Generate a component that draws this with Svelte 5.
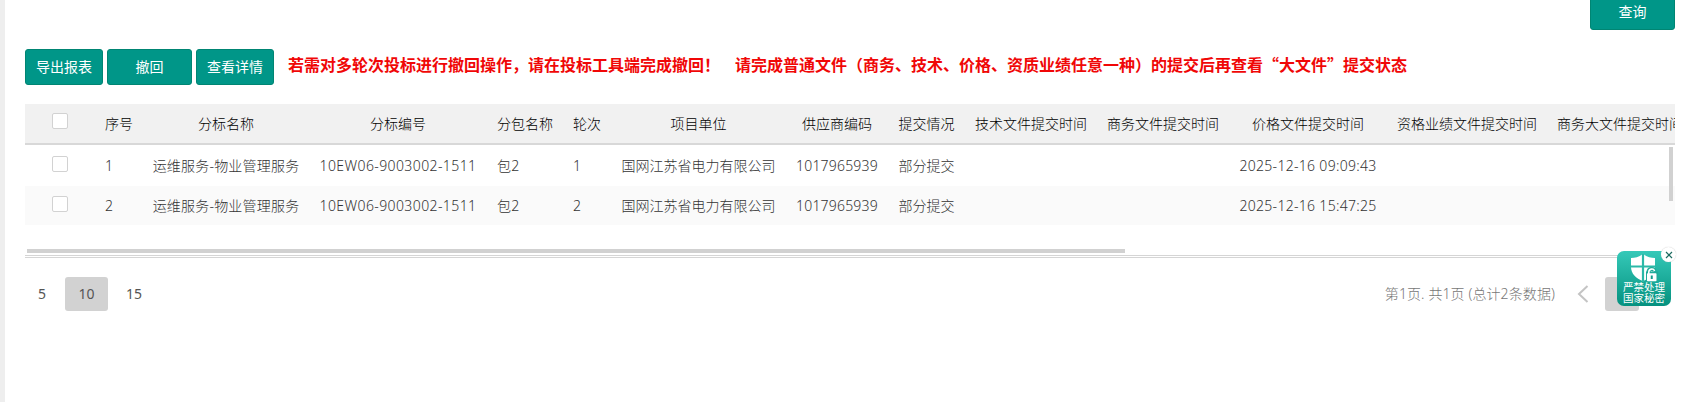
<script lang="ts">
  type Row = {
    index: number;
    lotName: string;
    lotCode: string;
    pack: string;
    round: number;
    unit: string;
    supplier: string;
    status: string;
    priceTime: string;
  };

  const COLUMNS = [
    { key: 'index', label: '序号', width: 48 },
    { key: 'lotName', label: '分标名称', width: 166 },
    { key: 'lotCode', label: '分标编号', width: 178 },
    { key: 'pack', label: '分包名称', width: 76 },
    { key: 'round', label: '轮次', width: 48 },
    { key: 'unit', label: '项目单位', width: 175 },
    { key: 'supplier', label: '供应商编码', width: 102 },
    { key: 'status', label: '提交情况', width: 77 },
    { key: 'techTime', label: '技术文件提交时间', width: 132 },
    { key: 'bizTime', label: '商务文件提交时间', width: 132 },
    { key: 'priceTime', label: '价格文件提交时间', width: 158 },
    { key: 'qualTime', label: '资格业绩文件提交时间', width: 160 },
    { key: 'bizBigTime', label: '商务大文件提交时间', width: 146 }
  ];

  const ROWS: Row[] = [
    {
      index: 1,
      lotName: '运维服务-物业管理服务',
      lotCode: '10EW06-9003002-1511',
      pack: '包2',
      round: 1,
      unit: '国网江苏省电力有限公司',
      supplier: '1017965939',
      status: '部分提交',
      priceTime: '2025-12-16 09:09:43'
    },
    {
      index: 2,
      lotName: '运维服务-物业管理服务',
      lotCode: '10EW06-9003002-1511',
      pack: '包2',
      round: 2,
      unit: '国网江苏省电力有限公司',
      supplier: '1017965939',
      status: '部分提交',
      priceTime: '2025-12-16 15:47:25'
    }
  ];

  const PAGE_SIZES = [5, 10, 15];

  let pageSize = $state(10);
  let selected = $state<number[]>([]);
  let badgeOpen = $state(true);

  function toggleAll() {
    selected = selected.length === ROWS.length ? [] : ROWS.map((row) => row.index);
  }
</script>

<div class="page">
  <div class="search-bar">
    <button type="button" class="btn btn-wide">查询</button>
  </div>

  <div class="toolbar">
    <button type="button" class="btn">导出报表</button>
    <button type="button" class="btn btn-wide">撤回</button>
    <button type="button" class="btn">查看详情</button>
    <p class="notice">
      <span>若需对多轮次投标进行撤回操作，请在投标工具端完成撤回！</span>
      <span>请完成普通文件（商务、技术、价格、资质业绩任意一种）的提交后再查看“大文件”提交状态</span>
    </p>
  </div>

  <div class="grid">
    <table>
      <colgroup>
        <col style:width="70px" />
        {#each COLUMNS as column}
          <col style:width="{column.width}px" />
        {/each}
      </colgroup>
      <thead>
        <tr>
          <th>
            <input
              type="checkbox"
              aria-label="全选"
              checked={selected.length === ROWS.length}
              onchange={toggleAll}
            />
          </th>
          {#each COLUMNS as column}
            <th>{column.label}</th>
          {/each}
        </tr>
      </thead>
      <tbody>
        {#each ROWS as row}
          <tr>
            <td class="check">
              <input type="checkbox" aria-label="选择" value={row.index} bind:group={selected} />
            </td>
            {#each COLUMNS as column}
              <td class={column.key}>{row[column.key as keyof Row] ?? ''}</td>
            {/each}
          </tr>
        {/each}
      </tbody>
    </table>
    <div class="scroll-y"></div>
    <div class="scroll-x"></div>
  </div>

  <div class="pager">
    <div class="sizes">
      {#each PAGE_SIZES as size}
        <button
          type="button"
          class="size"
          class:size-active={pageSize === size}
          onclick={() => (pageSize = size)}
        >
          {size}
        </button>
      {/each}
    </div>
    <div class="pages">
      <span class="summary">第1页. 共1页 (总计2条数据)</span>
      <svg class="prev" width="12" height="18" viewBox="0 0 12 18">
        <path d="M10.5 1 2 9l8.5 8" fill="none" stroke="#c4c4c4" stroke-width="2" />
      </svg>
      <span class="current"></span>
    </div>
  </div>

  {#if badgeOpen}
    <div class="badge">
      <svg width="28" height="28" viewBox="0 0 28 28">
        <path
          d="M1 4C5 4 8.500 3 13 0c4.500 3 8 4 12 4v9c0 6.500-5 11.500-12 14C6 24.500 1 19.500 1 13z"
          fill="#fff"
        />
        <path d="M13 0v28M0 12.500h26" stroke="#2bb9a8" stroke-width="2.200" />
        <path d="M16 17.500h12V28H16z" fill="#1fab99" />
        <path d="M18.500 20v-2a3.200 3.200 0 0 1 6.200-1" fill="none" stroke="#1fab99" stroke-width="4" />
        <path d="M18.800 20v-2a3 3 0 0 1 5.800-1" fill="none" stroke="#fff" stroke-width="1.600" />
        <rect x="17" y="19.300" width="9.500" height="8" rx="0.800" fill="#fff" />
        <path d="M21.750 21.500v3.500" stroke="#159b8b" stroke-width="2" />
      </svg>
      <span>严禁处理</span>
      <span>国家秘密</span>
      <button type="button" class="badge-close" aria-label="关闭" onclick={() => (badgeOpen = false)}>
        <svg width="8" height="8" viewBox="0 0 8 8">
          <path d="M1 1l6 6M7 1 1 7" stroke="#1d6b60" stroke-width="1.200" />
        </svg>
      </button>
    </div>
  {/if}
</div>

<style>
  :global(body) {
    background: #fff;
  }

  .page {
    box-sizing: border-box;
    position: relative;
    height: 402px;
    overflow: hidden;
    border-left: 5px solid #eee;
    padding: 0 19px 0 20px;
    font-family: 'Noto Sans', 'Noto Sans CJK SC', sans-serif;
    font-size: 14px;
    font-weight: 300;
    color: #333;
  }

  button {
    font-family: inherit;
    cursor: pointer;
  }

  .search-bar {
    display: flex;
    justify-content: flex-end;
    margin-top: -6px;
  }

  .btn {
    box-sizing: border-box;
    width: 78px;
    height: 36px;
    padding: 0;
    border: 1px solid #008573;
    border-radius: 3px;
    background: #009688;
    color: #fff;
    font-size: 14px;
    line-height: 34px;
    white-space: nowrap;
  }

  .btn-wide {
    width: 85px;
  }

  .toolbar {
    display: flex;
    gap: 4px;
    margin-top: 19px;
  }

  .notice {
    display: flex;
    gap: 15px;
    margin: 0 0 0 10px;
    color: #f00707;
    font-family: 'Noto Sans CJK SC', sans-serif;
    font-size: 16px;
    font-weight: 700;
    line-height: 30px;
    white-space: nowrap;
  }

  .grid {
    position: relative;
    height: 151px;
    margin-top: 19px;
    overflow: hidden;
    border-bottom: 1px solid #d5d5d5;
    box-shadow: 0 1px #fff, 0 2px #d5d5d5;
  }

  table {
    width: 1568px;
    table-layout: fixed;
    border-collapse: separate;
    border-spacing: 0;
  }

  th,
  td {
    box-sizing: border-box;
    padding: 0 0 2px;
    text-align: center;
    font-weight: inherit;
    white-space: nowrap;
  }

  th {
    height: 41px;
    border-bottom: 2px solid #d8d8d8;
    background: #f1f1f1;
    color: #000;
  }

  td {
    height: 41px;
    padding-bottom: 1px;
    letter-spacing: 0.2px;
  }

  tbody tr:nth-child(2) td {
    height: 39px;
    background: #fafafa;
  }

  td.index,
  td.pack,
  td.round {
    padding-left: 10px;
    text-align: left;
  }

  td.lotCode {
    letter-spacing: 0.4px;
  }

  td.unit,
  td.status {
    letter-spacing: 0;
  }

  td.priceTime {
    letter-spacing: 0.3px;
  }

  input {
    appearance: none;
    display: block;
    box-sizing: border-box;
    width: 16px;
    height: 16px;
    margin: -3px auto 0 27px;
    border: 1px solid #d2d2d2;
    border-radius: 2px;
    background: #fff;
  }

  input:checked {
    background: #009688;
  }

  .scroll-y {
    position: absolute;
    top: 43px;
    right: 2px;
    width: 4px;
    height: 54px;
    background: #d1d1d1;
  }

  .scroll-x {
    position: absolute;
    left: 2px;
    bottom: 2px;
    width: 1098px;
    height: 4px;
    background: #d1d1d1;
  }

  .pager {
    display: flex;
    justify-content: space-between;
    margin-top: 21px;
  }

  .sizes,
  .pages {
    display: flex;
    align-items: center;
  }

  .sizes {
    gap: 5px;
  }

  .size {
    height: 34px;
    padding: 0 13px 2px;
    border: 0;
    border-radius: 3px;
    background: none;
    color: #555;
    font-size: 14px;
  }

  .size-active {
    width: 43px;
    margin-left: 1px;
    background: #d2d2d2;
  }

  .summary {
    padding-bottom: 2px;
    color: #777;
    letter-spacing: 0.1px;
  }

  .prev {
    margin: 0 16px 0 22px;
  }

  .current {
    width: 34px;
    height: 34px;
    margin-right: 36px;
    border-radius: 3px;
    background: #d2d2d2;
  }

  .badge {
    position: absolute;
    top: 251px;
    right: 23px;
    display: flex;
    flex-direction: column;
    align-items: center;
    box-sizing: border-box;
    width: 54px;
    height: 55px;
    padding-top: 3px;
    border-radius: 7px;
    background: linear-gradient(#35c9b8, #05917f);
    color: #fff;
    font-size: 10.500px;
    font-weight: 400;
    line-height: 11px;
  }

  .badge svg {
    flex-shrink: 0;
  }

  .badge-close {
    position: absolute;
    top: -4px;
    right: -5px;
    display: flex;
    align-items: center;
    justify-content: center;
    width: 15px;
    height: 15px;
    padding: 0;
    border: 0;
    border-radius: 50%;
    background: #fff;
    box-shadow: 0 0 1px #bbb;
  }
</style>
